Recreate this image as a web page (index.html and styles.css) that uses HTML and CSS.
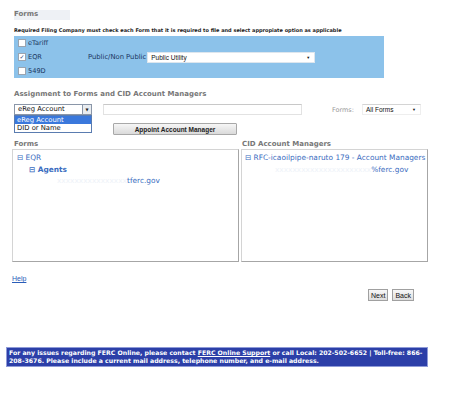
FILE: index.html
```html
<!DOCTYPE html>
<html lang="en">
<head>
    <meta charset="utf-8">
    <title>FERC Online - Forms</title>
    <link rel="stylesheet" href="styles.css">
</head>
<body>
    <div class="page">
        <!-- Forms -->
        <div class="forms-title">Forms</div>
        <div class="note">Required Filing Company must check each Form that it is required to file and select appropiate option as applicable</div>

        <div class="form-box">
            <div class="form-row">
                <label class="chk"><span class="cb"></span>eTariff</label>
            </div>
            <div class="form-row">
                <label class="chk"><span class="cb checked">&#10003;</span>EQR</label>
                <span class="pub-label">Public/Non Public</span>
                <div class="select pub-select">Public Utility<span class="arrow">&#9660;</span></div>
            </div>
            <div class="form-row">
                <label class="chk"><span class="cb"></span>549D</label>
            </div>
        </div>

        <!-- Assignment -->
        <div class="section-title">Assignment to Forms and CID Account Managers</div>
        <div class="search-row">
            <div class="select type-select">eReg Account<span class="arrow-btn">&#9660;</span></div>
            <div class="text-input"></div>
            <span class="forms-label">Forms:</span>
            <div class="select forms-select">All Forms<span class="arrow">&#9660;</span></div>

            <div class="dropdown">
                <div class="option active">eReg Account</div>
                <div class="option">DID or Name</div>
            </div>
        </div>
        <button class="appoint-btn">Appoint Account Manager</button>

        <div class="tree-heads">
            <div class="tree-head left-head">Forms</div>
            <div class="tree-head">CID Account Managers</div>
        </div>
        <div class="tree-boxes">
            <div class="tree-box left-box">
                <div class="node">&#8863; EQR</div>
                <div class="node level2 bold">&#8863; Agents</div>
                <div class="node level3"><span class="blur">xxxxxxxxxxxxxxxx</span>tferc.gov</div>
            </div>
            <div class="tree-box right-box">
                <div class="node">&#8863; RFC-icaoilpipe-naruto 179 - Account Managers</div>
                <div class="node level3r"><span class="blur">xxxxxxxxxxxxxxxxxxxxxx</span>%ferc.gov</div>
            </div>
        </div>

        <a class="help" href="#">Help</a>
        <div class="nav-buttons">
            <button class="nav-btn">Next</button>
            <button class="nav-btn">Back</button>
        </div>

        <div class="footer">For any issues regarding FERC Online, please contact <a href="#">FERC Online Support</a> or call Local: 202-502-6652 | Toll-free: 866-208-3676. Please include a current mail address, telephone number, and e-mail address.</div>
    </div>
</body>
</html>
```

FILE: styles.css
```css
body {
    margin: 0;
    padding: 0;
    background: #ffffff;
    font-family: "DejaVu Sans", Verdana, sans-serif;
}
.page {
    width: 458px;
}
.forms-title {
    margin: 10px 0 0 14px;
    width: 56px;
    height: 10px;
    line-height: 8px;
    overflow: hidden;
    background: #eef1f5;
    color: #777777;
    font-size: 7px;
    font-weight: bold;
}
.note {
    margin: 6px 0 0 14px;
    line-height: 8px;
    font-size: 5px;
    font-weight: bold;
    color: #222222;
}
.form-box {
    margin: 2px 0 0 14px;
    width: 370px;
    height: 42px;
    background: #8cc2ea;
}
.form-row {
    display: flex;
    align-items: center;
    height: 14px;
}
.chk {
    display: flex;
    align-items: center;
    width: 70px;
    margin-left: 4px;
    font-size: 6.6px;
    color: #1a3560;
}
.cb {
    width: 6px;
    height: 6px;
    margin-right: 2px;
    background: #ffffff;
    border: 1px solid #9aa4b0;
    font-size: 6px;
    line-height: 6px;
    text-align: center;
    color: #2a3a70;
}
.pub-label {
    font-size: 6.8px;
    color: #1a3560;
}
.select {
    position: relative;
    box-sizing: border-box;
    height: 11px;
    line-height: 9px;
    background: #ffffff;
    font-family: "Liberation Sans", Arial, sans-serif;
    font-size: 6.5px;
    color: #111111;
    padding-left: 3px;
}
.arrow {
    position: absolute;
    right: 4px;
    top: 0;
    font-size: 4px;
}
.pub-select {
    width: 168px;
    margin-left: 1px;
    border: 1px solid #dde6ee;
}
.section-title {
    margin: 11px 0 0 14px;
    line-height: 10px;
    font-size: 7px;
    font-weight: bold;
    color: #777777;
}
.search-row {
    position: relative;
    display: flex;
    align-items: center;
    margin-top: 5px;
    height: 11px;
}
.type-select {
    width: 78px;
    margin-left: 14px;
    border: 1px solid #8a96a8;
    font-family: "DejaVu Sans", Verdana, sans-serif;
    font-size: 6.8px;
}
.arrow-btn {
    position: absolute;
    right: 0;
    top: 0;
    width: 9px;
    height: 9px;
    box-sizing: border-box;
    border-left: 1px solid #8a96a8;
    background: #e8ecf0;
    font-size: 4px;
    text-align: center;
    color: #222222;
}
.text-input {
    box-sizing: border-box;
    width: 199px;
    height: 11px;
    margin-left: 11px;
    border: 1px solid #e2e2e2;
    border-top-color: #c8c8c8;
}
.forms-label {
    margin-left: 30px;
    font-size: 6.5px;
    color: #999999;
}
.forms-select {
    width: 59px;
    margin-left: 8px;
    border: 1px solid #eeeeee;
    border-top-color: #d4d4d4;
}
.dropdown {
    position: absolute;
    top: 11px;
    left: 14px;
    width: 78px;
    box-sizing: border-box;
    background: #ffffff;
    border: 1px solid #5a7cb0;
}
.option {
    height: 8px;
    line-height: 8px;
    padding-left: 2px;
    font-size: 6.8px;
    color: #111111;
}
.option.active {
    background: #3a78dc;
    color: #ffffff;
}
.appoint-btn {
    display: block;
    box-sizing: border-box;
    width: 124px;
    height: 12px;
    margin: 8px 0 0 113px;
    padding: 0;
    border: 1px solid #a8a8a8;
    border-radius: 1px;
    background: linear-gradient(#f6f6f6, #dadada);
    font-family: "Liberation Sans", Arial, sans-serif;
    font-size: 6.5px;
    font-weight: bold;
    color: #222222;
}
.tree-heads {
    display: flex;
    margin-top: 4px;
    line-height: 10px;
}
.tree-head {
    font-size: 7px;
    font-weight: bold;
    color: #777777;
}
.left-head {
    width: 228px;
    margin-left: 14px;
}
.tree-boxes {
    display: flex;
    gap: 2px;
    margin-left: 12px;
}
.tree-box {
    box-sizing: border-box;
    height: 113px;
    padding-top: 2px;
    border: 1px solid #d4d4d4;
    border-right-color: #a6a6a6;
    border-bottom-color: #a6a6a6;
}
.left-box {
    width: 227px;
    padding-left: 4px;
}
.right-box {
    width: 187px;
    padding-left: 3px;
}
.node {
    line-height: 11.5px;
    font-size: 7.4px;
    color: #3a6cc0;
    white-space: nowrap;
    overflow: hidden;
}
.bold {
    font-weight: bold;
}
.level2 {
    padding-left: 12px;
}
.level3 {
    padding-left: 40px;
}
.level3r {
    padding-left: 30px;
}
.blur {
    color: #eef2f8;
}
.help {
    display: block;
    width: 18px;
    margin: 12px 0 0 12px;
    line-height: 10px;
    font-family: "Liberation Sans", Arial, sans-serif;
    font-size: 7px;
    color: #2a5db8;
}
.nav-buttons {
    display: flex;
    justify-content: flex-end;
    gap: 4px;
    width: 414px;
    margin-top: 5px;
}
.nav-btn {
    box-sizing: border-box;
    height: 12px;
    padding: 0 2px;
    border: 1px solid #a0a0a0;
    background: linear-gradient(#f8f8f8, #dedede);
    font-family: "Liberation Sans", Arial, sans-serif;
    font-size: 7px;
    color: #111111;
}
.footer {
    box-sizing: border-box;
    width: 422px;
    margin: 46px 0 0 6px;
    padding: 1px 2px;
    background: #2c3fa8;
    border: 1px solid #8f9bd8;
    line-height: 8px;
    font-size: 6.2px;
    font-weight: bold;
    color: #ffffff;
}
.footer a {
    color: #ffffff;
}
```
